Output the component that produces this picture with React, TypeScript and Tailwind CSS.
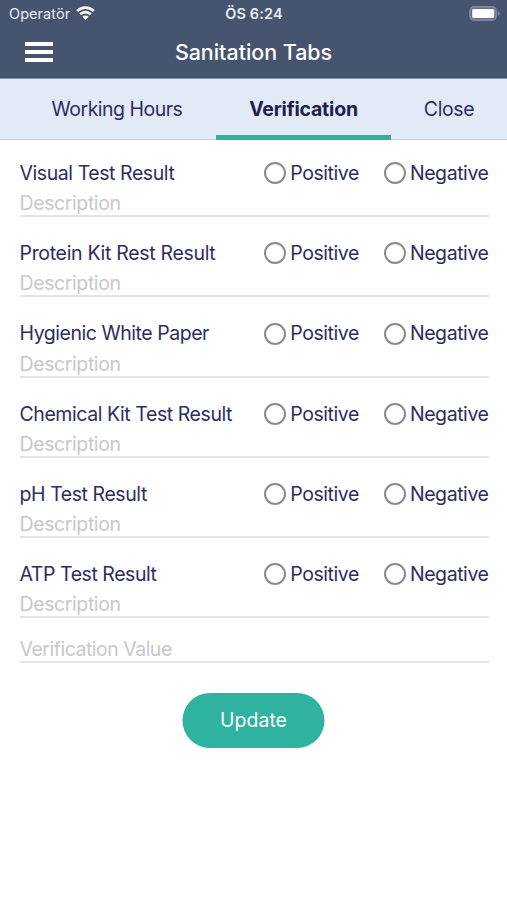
const tests = [
  { name: 'Visual Test Result', tracking: 'tracking-[-0.43px]' },
  { name: 'Protein Kit Rest Result', tracking: 'tracking-[-0.31px]' },
  { name: 'Hygienic White Paper', tracking: 'tracking-[-0.46px]' },
  { name: 'Chemical Kit Test Result', tracking: 'tracking-[-0.43px]' },
  { name: 'pH Test Result', tracking: 'tracking-[-0.43px]' },
  { name: 'ATP Test Result', tracking: 'tracking-[-0.45px]' },
]

function WifiIcon() {
  return (
    <svg className="mb-px" width="19" height="14" viewBox="0 0 19 14" fill="none" stroke="white" strokeWidth="2.6">
      <path d="M1.2 5a11.8 11.8 0 0 1 16.6 0" />
      <path d="M4.2 8.3a7.6 7.6 0 0 1 10.6 0" />
      <path d="M9.5 14 6.4 10.8a4.4 4.4 0 0 1 6.2 0Z" fill="white" stroke="none" />
    </svg>
  )
}

function BatteryIcon() {
  return (
    <svg width="31" height="15" viewBox="0 0 31 15" fill="none">
      <rect x="1" y="0.9" width="26.2" height="13.2" rx="4" fill="#65708e" stroke="#8088a6" strokeWidth="1.6" />
      <rect x="3.2" y="3" width="22" height="9" rx="1.5" fill="white" />
      <path d="M28.8 5.2c1.6.5 2.2 1.4 2.2 2.3s-.6 1.8-2.2 2.3Z" fill="#8088a6" />
    </svg>
  )
}

function Option({ label }: { label: string }) {
  return (
    <label className="flex items-center gap-1">
      <span className="size-[22px] rounded-full border-2 border-[#8b8b8b]" />
      <span className="pt-px tracking-[-0.43px]">{label}</span>
    </label>
  )
}

export default function App() {
  return (
    <div className="h-[900px] w-[507px] overflow-hidden bg-white font-['Inter',sans-serif] text-[19.5px] text-[#2e2c62]">
      <header className="h-[79px] border-b border-[#8594ae] bg-[#475470] text-white">
        <div className="grid h-[27px] grid-cols-3 items-center pr-[7px] pl-[9px] text-[14.5px] leading-none text-[#e6ecf8]">
          <div className="flex items-center gap-1.5">
            <span className="pt-0.5 tracking-[0.05px]">Operatör</span>
            <WifiIcon />
          </div>
          <span className="pt-0.5 pr-px text-center font-semibold tracking-[0.15px]">ÖS 6:24</span>
          <div className="flex justify-end">
            <BatteryIcon />
          </div>
        </div>
        <div className="grid h-[50px] grid-cols-[100px_1fr_100px] items-center">
          <button className="ml-[25px] flex w-[28px] flex-col gap-[4.3px]">
            <span className="h-1 bg-white" />
            <span className="h-1 bg-white" />
            <span className="h-1 bg-white" />
          </button>
          <h1 className="pt-px text-center text-[21.4px] font-medium">Sanitation Tabs</h1>
        </div>
      </header>

      <nav className="flex h-[61px] border-b border-[#c9cdd6] bg-[#e3eaf7]">
        <button className="w-[216px] pt-px pl-[18px] text-center tracking-[-0.5px]">Working Hours</button>
        <button className="-mb-px w-[175px] border-b-[5px] border-[#2fb29c] pt-1.5 text-center font-bold tracking-[-0.2px] text-[#20204f]">
          Verification
        </button>
        <button className="w-[116px] pt-px text-center tracking-[-0.4px]">Close</button>
      </nav>

      <main className="pt-5 pr-[18.5px] pl-[19.5px]">
        {tests.map((test) => (
          <section key={test.name} className="h-[80.25px]">
            <div className="flex h-[26px] items-center justify-between">
              <h2 className={`pt-px ${test.tracking}`}>{test.name}</h2>
              <div className="flex gap-[25px]">
                <Option label="Positive" />
                <Option label="Negative" />
              </div>
            </div>
            <div className="h-[31px] border-b-2 border-[#e4e4e4] pt-1 leading-[26px] tracking-[-0.4px] text-[#c8c8c8]">
              Description
            </div>
          </section>
        ))}
        <div className="mt-[-9px] h-[30px] border-b-2 border-[#e4e4e4] pt-[3px] leading-[26px] tracking-[-0.5px] text-[#c8c8c8]">
          Verification Value
        </div>
        <button className="mx-auto mt-[30px] block h-[55px] w-[142px] -translate-x-[0.5px] rounded-full bg-[#2fb29f] pt-px text-white">
          Update
        </button>
      </main>
    </div>
  )
}
